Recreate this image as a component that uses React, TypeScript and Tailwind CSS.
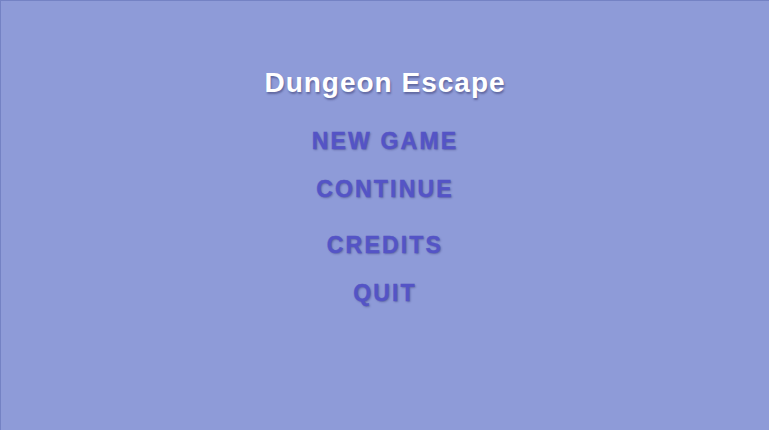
import React from "react";

const items = [
  { label: "NEW GAME", mt: "mt-[26px]" },
  { label: "CONTINUE", mt: "mt-[20px]" },
  { label: "CREDITS", mt: "mt-[28px]" },
  { label: "QUIT", mt: "mt-[20px]" },
];

export default function App() {
  return (
    <div className="w-[769px] h-[430px] bg-[#8e9bd8] border-t border-l border-[#7482c4] flex flex-col items-center pt-[64px] font-['Liberation_Sans',Arial,sans-serif]">
      <h1 className="text-[28px] leading-[36px] font-bold tracking-[1px] text-white [text-shadow:1px_2px_2px_rgba(40,40,90,0.45)]">
        Dungeon Escape
      </h1>
      {items.map((it) => (
        <button
          key={it.label}
          className={`${it.mt} text-[23px] leading-[28px] font-bold tracking-[2.2px] text-[#5454c6] [-webkit-text-stroke:0.4px_#5454c6] [text-shadow:1px_1px_2px_rgba(30,30,90,0.4)]`}
        >
          {it.label}
        </button>
      ))}
    </div>
  );
}
